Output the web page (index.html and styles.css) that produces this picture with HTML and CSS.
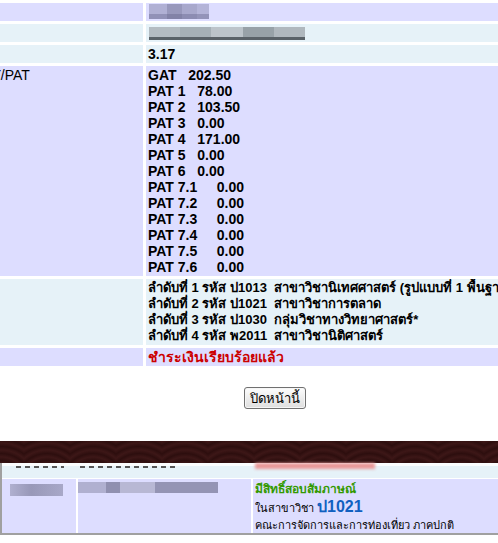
FILE: index.html
```html
<!DOCTYPE html>
<html lang="th">
<head>
  <meta charset="UTF-8" />
  <title>ผลการสมัคร</title>
  <link rel="stylesheet" href="styles.css">
</head>
<body>

<div class="sheet">
<table class="info">
  <tr class="odd cut"><td class="label"></td><td class="wide"></td></tr>
  <tr class="odd"><td class="label"></td><td><span class="mosaic name"></span></td></tr>
  <tr class="even"><td class="label"></td><td><span class="mosaic school"></span></td></tr>
  <tr class="even"><td class="label"></td><td class="val">3.17</td></tr>
  <tr class="odd">
    <td class="label">GAT/PAT</td>
    <td class="val scores">
      <div>GAT   202.50</div>
      <div>PAT 1   78.00</div>
      <div>PAT 2   103.50</div>
      <div>PAT 3   0.00</div>
      <div>PAT 4   171.00</div>
      <div>PAT 5   0.00</div>
      <div>PAT 6   0.00</div>
      <div>PAT 7.1     0.00</div>
      <div>PAT 7.2     0.00</div>
      <div>PAT 7.3     0.00</div>
      <div>PAT 7.4     0.00</div>
      <div>PAT 7.5     0.00</div>
      <div>PAT 7.6     0.00</div>
    </td>
  </tr>
  <tr class="even">
    <td class="label"></td>
    <td class="val choices">
      <div>ลำดับที่ 1 รหัส ป1013  สาขาวิชานิเทศศาสตร์ (รูปแบบที่ 1 พื้นฐานวิทย์-คณิต)</div>
      <div>ลำดับที่ 2 รหัส ป1021  สาขาวิชาการตลาด</div>
      <div>ลำดับที่ 3 รหัส ป1030  กลุ่มวิชาทางวิทยาศาสตร์*</div>
      <div>ลำดับที่ 4 รหัส พ2011  สาขาวิชานิติศาสตร์</div>
    </td>
  </tr>
  <tr class="odd"><td class="label"></td><td class="val paid">ชำระเงินเรียบร้อยแล้ว</td></tr>
</table>
</div>

<div class="actions">
  <button type="button" onclick="window.close()">ปิดหน้านี้</button>
</div>

<div class="band"></div>

<div class="result">
  <div class="peek">
    <span class="smudge s1"></span>
    <span class="smudge s2"></span>
    <span class="smudge s3"></span>
  </div>
  <div class="result-row">
    <div class="cell c1"><span class="mosaic id"></span></div>
    <div class="cell c2"><span class="mosaic fullname"></span></div>
    <div class="cell c3">
      <div class="ok">มีสิทธิ์สอบสัมภาษณ์</div>
      <div>ในสาขาวิชา <span class="code">ป1021</span></div>
      <div class="faculty">คณะการจัดการและการท่องเที่ยว ภาคปกติ</div>
    </div>
  </div>
</div>

</body>
</html>
```

FILE: styles.css
```css
body { margin: 0; background: #fff; overflow: hidden; font-family: Tahoma, "Liberation Sans", sans-serif; font-size: 13px; color: #000; }
.sheet { overflow: hidden; }
.info { border-spacing: 3px; margin: -3px 0 0 -33px; white-space: nowrap; table-layout: fixed; width: 760px; }
.info td { padding: 1px 3px; line-height: 16px; vertical-align: top; overflow: hidden; }
.info .label { width: 167px; font-size: 14px; }
.odd td { background: #ddddff; }
.even td { background: #e6f2f8; }
.cut td { height: 0; padding: 0; line-height: 2px; font-size: 0; }
.cut td.label { width: 173px; }
.val { font-weight: bold; font-family: "Liberation Sans", sans-serif; font-size: 14px; padding-left: 2px !important; }
.scores div { white-space: pre; }
.choices div { white-space: pre; font-size: 13px; }
.paid { color: #cc0000; }

.mosaic { display: inline-block; vertical-align: top; }
.name { width: 60px; height: 15px; background: linear-gradient(90deg, #b0b0d4 0 30%, #9898bc 30% 55%, #a8a8cc 55% 80%, #b4b4d8 80%); box-shadow: inset 0 -5px 0 rgba(90,90,130,0.35); }
.school { width: 156px; height: 13px; margin-top: 2px; background: linear-gradient(90deg, #b4bcc2 0 20%, #a6b0b6 20% 40%, #bcc4ca 40% 60%, #98a2a8 60% 80%, #b0b8be 80%); box-shadow: inset 0 -3px 0 #5a6268; }

.actions { display: flex; justify-content: center; padding: 18px 0 32px 52px; }
.actions button { font: 13px Tahoma, "Liberation Sans", sans-serif; width: 62px; height: 22px; padding: 0; background: linear-gradient(#fdfdfd, #dedede); border: 1px solid #707070; border-radius: 3px; box-shadow: inset 0 0 0 1px #f6f6f6; color: #000; }

.band { height: 22px; background-color: #2e0f0f; background-image: repeating-radial-gradient(circle at 50% 100%, #3d1717 0, #2d0e0e 3.5px, #3d1717 7px); background-size: 46px 44px; background-position: -22px 0; }

.result { border-left: 2px solid #a0a0a0; border-bottom: 2px solid #a0a0a0; width: 600px; }
.peek { height: 15px; background: linear-gradient(#fbfdfe 0 3px, #e6f2f8 3px); position: relative; border-bottom: 1px solid #fff; }
.smudge { position: absolute; top: 3px; height: 2px; }
.s1 { left: 14px; width: 48px; background: repeating-linear-gradient(90deg, #555 0 5px, transparent 5px 9px); }
.s2 { left: 78px; width: 96px; background: repeating-linear-gradient(90deg, #555 0 5px, transparent 5px 9px); }
.s3 { left: 253px; width: 120px; top: 0; height: 6px; background: #e89898; filter: blur(1.5px); }
.result-row { display: flex; background: #ddddff; height: 54px; }
.cell { border-right: 2px solid #fff; }
.c1 { width: 74px; }
.c2 { width: 173px; }
.c3 { border-right: 0; padding: 2px 2px; line-height: 17px; font-size: 11px; }
.id { width: 53px; height: 12px; margin: 5px 0 0 8px; background: linear-gradient(90deg, #b0b0d0, #9898b8 40%, #a8a8c8); }
.fullname { width: 140px; height: 11px; margin-top: 3px; background: linear-gradient(90deg, #b0b0d0 0 20%, #9090b0 20% 30%, #b8b8d4 30% 55%, #9494b4 55%); }
.ok { color: #339900; font-weight: bold; font-size: 12px; }
.code { color: #1060c0; font-weight: bold; font-size: 16px; font-family: "Liberation Sans", sans-serif; }
.faculty { font-size: 11px; }
```
